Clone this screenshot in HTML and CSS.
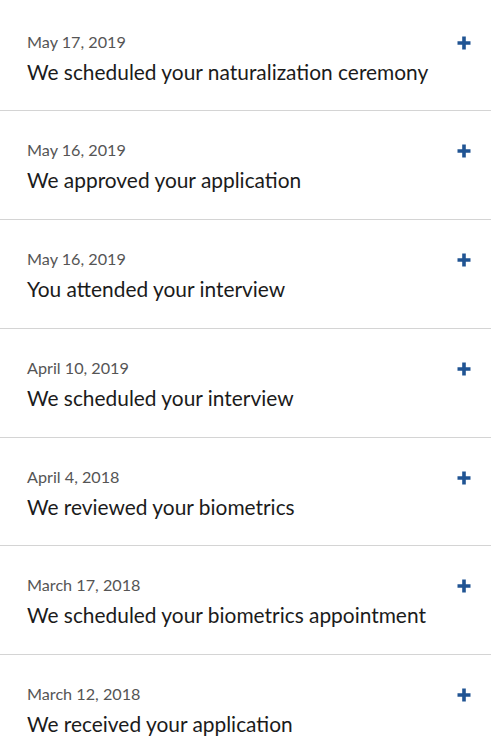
FILE: index.html
```
<!DOCTYPE html>
<html lang="en">
<head>
<meta charset="utf-8">
<title>Case history</title>
<link rel="stylesheet" href="styles.css">
</head>
<body>
<ul class="history">
  <li class="event"><div class="text"><div class="date">May 17, 2019</div><div class="title">We scheduled your naturalization ceremony</div></div><svg class="plus" viewBox="0 0 14 14"><path d="M7 0.5V13.5M0.5 7H13.5"/></svg></li>
  <li class="event"><div class="text"><div class="date">May 16, 2019</div><div class="title">We approved your application</div></div><svg class="plus" viewBox="0 0 14 14"><path d="M7 0.5V13.5M0.5 7H13.5"/></svg></li>
  <li class="event"><div class="text"><div class="date">May 16, 2019</div><div class="title">You attended your interview</div></div><svg class="plus" viewBox="0 0 14 14"><path d="M7 0.5V13.5M0.5 7H13.5"/></svg></li>
  <li class="event"><div class="text"><div class="date">April 10, 2019</div><div class="title">We scheduled your interview</div></div><svg class="plus" viewBox="0 0 14 14"><path d="M7 0.5V13.5M0.5 7H13.5"/></svg></li>
  <li class="event"><div class="text"><div class="date">April 4, 2018</div><div class="title">We reviewed your biometrics</div></div><svg class="plus" viewBox="0 0 14 14"><path d="M7 0.5V13.5M0.5 7H13.5"/></svg></li>
  <li class="event"><div class="text"><div class="date">March 17, 2018</div><div class="title">We scheduled your biometrics appointment</div></div><svg class="plus" viewBox="0 0 14 14"><path d="M7 0.5V13.5M0.5 7H13.5"/></svg></li>
  <li class="event"><div class="text"><div class="date">March 12, 2018</div><div class="title">We received your application</div></div><svg class="plus" viewBox="0 0 14 14"><path d="M7 0.5V13.5M0.5 7H13.5"/></svg></li>
</ul>
</body>
</html>
```
FILE: styles.css
```
html, body {
  margin: 0;
  padding: 0;
  background: #ffffff;
}
body {
  font-family: Lato, "Liberation Sans", sans-serif;
  overflow: hidden;
}
.history {
  list-style: none;
  margin: 0;
  padding: 2.5px 0 0 0;
}
.event {
  box-sizing: border-box;
  height: 108.8px;
  border-bottom: 1px solid #d4d4d4;
  display: flex;
  align-items: flex-start;
  justify-content: space-between;
  padding: 29px 20px 0 27px;
}
.date {
  font-size: 16.2px;
  line-height: 20px;
  color: #555555;
}
.title {
  margin-top: 7px;
  font-size: 20.9px;
  line-height: 26px;
  color: #1b1b1b;
}
.plus {
  width: 14px;
  height: 14px;
  margin-top: 4px;
  flex: none;
  fill: none;
  stroke: #205493;
  stroke-width: 3.6;
}
```
